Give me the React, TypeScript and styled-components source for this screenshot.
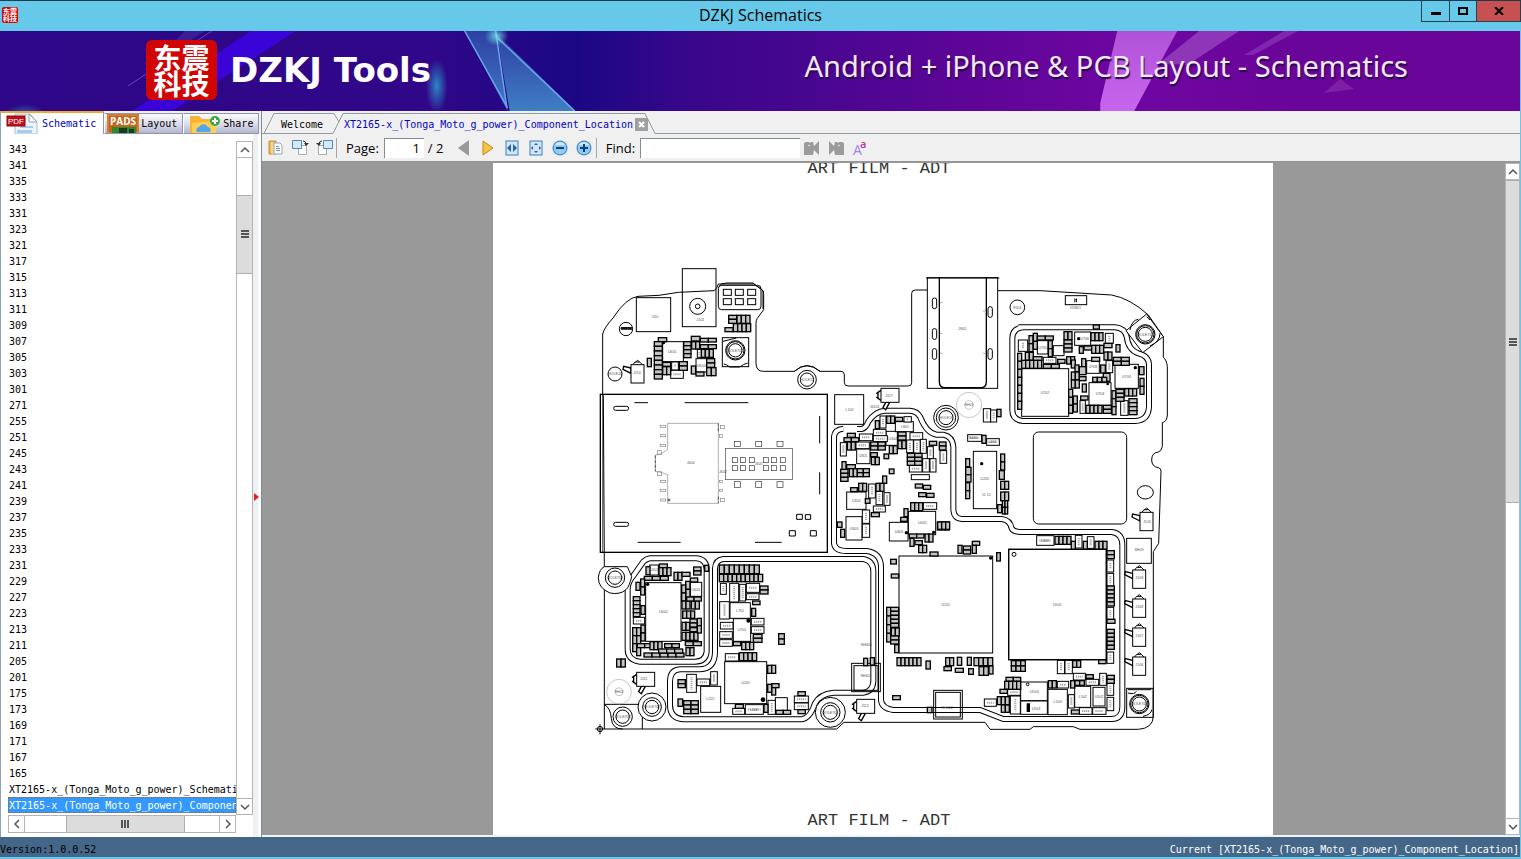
import React from "react";
import styled, { createGlobalStyle, css } from "styled-components";

const mono = `"DejaVu Sans Mono", "Liberation Mono", monospace`;
const sans = `"Open Sans", "Noto Sans", sans-serif`;

const GlobalStyle = createGlobalStyle`
  *, *::before, *::after { box-sizing: border-box; }
  body { margin: 0; overflow: hidden; }
  button, input { font: inherit; color: inherit; }
  button { border: 0; padding: 0; background: none; }
`;

const Window = styled.div`
  display: flex;
  flex-direction: column;
  height: 100vh;
  background: #66c9e9;
  border-top: 1px solid #173c50;
  border-bottom: 2px solid #66c9e9;
  font-family: ${mono};
  font-size: 10px;
  color: #000;
`;

const TitleBar = styled.header`
  position: relative;
  flex: none;
  display: flex;
  align-items: flex-start;
  justify-content: space-between;
  height: 30px;
  padding-left: 2px;
`;

const TitleText = styled.h1`
  flex: 1;
  margin: 0;
  padding-left: 82px;
  text-align: center;
  font: 400 16px/28px ${sans};
`;

const Seal = styled.div<{ $large?: boolean }>`
  flex: none;
  display: grid;
  place-items: center;
  color: #fff;
  background: #d20505;
  font-family: "Noto Sans CJK SC", sans-serif;
  font-weight: 700;
  text-align: center;
  ${(p) =>
    p.$large
      ? css`width: 71px; height: 60px; border-radius: 6px; font-size: 28px; line-height: 26px;`
      : css`width: 16px; height: 16px; margin-top: 6px; border-radius: 2px; font-size: 7px; line-height: 7px;`}
`;

const WindowButtons = styled.div`
  display: flex;
  border: 1px solid #263f49;
  border-top: 0;
  height: 21px;
`;

const WindowButton = styled.button<{ $close?: boolean }>`
  display: grid;
  place-items: center;
  width: ${(p) => (p.$close ? 44 : 27)}px;
  background: ${(p) => (p.$close ? "#c75050" : "transparent")};
  & + & { border-left: 1px solid #263f49; }
`;

const BannerBar = styled.section`
  position: relative;
  flex: none;
  display: flex;
  align-items: center;
  height: 80px;
  margin-right: 1px;
  padding: 0 112px 0 146px;
  overflow: hidden;
  color: #fff;
  background: linear-gradient(90deg, #2d0787 0, #300788 28%, #1b0784 38%, #37078a 45%, #5c0596 63%, #7006a2 75%, #690598 85%, #690598 100%);
`;

const BannerArt = styled.svg`
  position: absolute;
  inset: 0;
  width: 100%;
  height: 100%;
`;

const Brand = styled.div`
  position: relative;
  display: flex;
  align-items: center;
  gap: 13px;
  padding-bottom: 2px;
  font: 700 34px/60px "DejaVu Sans", sans-serif;
`;

const Slogan = styled.p`
  position: relative;
  margin: 0 0 10px auto;
  font: 400 29px/40px "Noto Sans", sans-serif;
  color: #f2e8fa;
  text-shadow: 1px 2px 1px #28084a;
  white-space: nowrap;
`;

const Main = styled.main`
  flex: 1;
  min-height: 0;
  display: flex;
  margin-right: 1px;
  background: #f0f0f0;
`;

const SidePanel = styled.aside`
  flex: none;
  display: flex;
  flex-direction: column;
  width: 261px;
  border-left: 1px solid #8fa3b5;
`;

const SideTabs = styled.nav`
  flex: none;
  display: flex;
  align-items: flex-end;
  height: 23px;
  background: #f0f0f0;
`;

const SideTab = styled.button<{ $active?: boolean }>`
  display: flex;
  align-items: center;
  gap: 2px;
  overflow: hidden;
  height: 21px;
  padding: 0 5px 0 2px;
  border: 1px solid #8b97b0;
  border-left-color: #fff;
  background: linear-gradient(#fafafc, #dedeea 50%, #b6b6d0);
  ${(p) =>
    p.$active &&
    css`
      height: 23px;
      gap: 4px;
      padding: 0 7px 0 5px;
      border: 0;
      border-top: 2px solid #f0a830;
      border-right: 1px solid #8b97b0;
      background: #fff;
      color: #0000c0;
    `}
`;

const SideBody = styled.div`
  position: relative;
  flex: 1;
  min-height: 0;
  display: grid;
  grid-template: minmax(0, 1fr) 18px / minmax(0, 1fr) 17px;
  padding: 7px 8px 4px 7px;
  background: linear-gradient(90deg, #fff 252px, #eef1f3 252px, #eef1f3 257px, #fff 257px);
`;

const FileList = styled.ul`
  margin: 0;
  padding: 0;
  list-style: none;
  overflow: hidden;
  background: #fff;
`;

const FileRow = styled.li<{ $selected?: boolean }>`
  height: 16px;
  padding: 1px 0 0 1px;
  line-height: 16px;
  white-space: nowrap;
  overflow: hidden;
  ${(p) =>
    p.$selected &&
    css`
      color: #fff;
      background: #3399ff;
      outline: 1px dotted #a0661e;
      outline-offset: -1px;
    `}
`;

const SplitMark = styled.svg`
  position: absolute;
  right: 2px;
  top: 51%;
`;

const Track = styled.div<{ $row?: boolean }>`
  display: flex;
  flex-direction: ${(p) => (p.$row ? "row" : "column")};
  min-width: 0;
  min-height: 0;
  background: #fff;
  border: 1px solid #b4b4b4;
`;

const Arrow = styled.button<{ $row?: boolean }>`
  flex: none;
  display: grid;
  place-items: center;
  width: ${(p) => (p.$row ? "16px" : "auto")};
  height: ${(p) => (p.$row ? "auto" : "16px")};
  border: 0 solid #b4b4b4;
  border-width: ${(p) => (p.$row ? "0 1px 0 0" : "0 0 1px")};
  &:last-child { border-width: ${(p) => (p.$row ? "0 0 0 1px" : "1px 0 0")}; }
`;

const Thumb = styled.div<{ $row?: boolean; $grow: number }>`
  flex: ${(p) => p.$grow} 1 0;
  display: grid;
  place-items: center;
  background: #dcdcdc;
  border: solid #b0b0b0;
  border-width: ${(p) => (p.$row ? "0 1px" : "1px 0")};
`;

const Space = styled.div<{ $grow: number }>`
  flex: ${(p) => p.$grow} 1 0;
`;

const Document = styled.section`
  flex: 1;
  min-width: 0;
  display: flex;
  flex-direction: column;
  border-left: 1px solid #808c94;
`;

const DocTabs = styled.nav`
  flex: none;
  display: flex;
  height: 23px;
  background: #f0f0f0;
`;

const DocTab = styled.div<{ $active?: boolean }>`
  position: relative;
  flex: none;
  display: flex;
  align-items: center;
  gap: 2px;
  width: ${(p) => (p.$active ? 323 : 71)}px;
  padding: 4px 0 0 ${(p) => (p.$active ? 11 : 19)}px;
  color: ${(p) => (p.$active ? "#0000c8" : "#000")};
`;

const TabEdge = styled.svg`
  position: absolute;
  left: 0;
  top: 0;
`;

const TabLabel = styled.button`
  position: relative;
  line-height: 14px;
`;

const CloseTab = styled.button`
  position: relative;
  display: grid;
  place-items: center;
  width: 13px;
  height: 13px;
  background: #a0a0a0;
`;

const TabRule = styled.div`
  flex: 1;
  border-bottom: 1px solid #8d9ba3;
`;

const Toolbar = styled.form`
  flex: none;
  display: flex;
  align-items: center;
  height: 29px;
  padding-left: 2px;
  background: #f0f0f0;
  border-bottom: 2px solid #969696;
  font: 400 13px/20px ${sans};
`;

const Tool = styled.button`
  flex: none;
  display: grid;
  place-items: center;
  width: 24px;
  height: 24px;
`;

const Divider = styled.span`
  width: 1px;
  height: 20px;
  margin-right: 9px;
  background: #a5a5a5;
`;

const Field = styled.input<{ $page?: boolean }>`
  width: ${(p) => (p.$page ? 40 : 160)}px;
  height: 20px;
  margin: 0 ${(p) => (p.$page ? 4 : 0)}px 0 5px;
  padding: 0 4px;
  border: solid #808c94;
  border-width: 1px 0 0 1px;
  background: #fff;
  outline: 0;
  text-align: ${(p) => (p.$page ? "right" : "left")};
`;

const PageCount = styled.span`
  width: 24px;
`;

const Viewer = styled.div`
  flex: 1;
  min-height: 0;
  display: grid;
  grid-template-columns: minmax(0, 1fr) 15px;
  background: #999;
  border-bottom: 2px solid #f0f4f8;
`;

const Sheet = styled.article`
  position: relative;
  justify-self: center;
  display: flex;
  flex-direction: column;
  align-items: center;
  justify-content: space-between;
  width: 780px;
  max-width: 100%;
  margin-right: 1px;
  overflow: hidden;
  background: #fff;
`;

const FilmTitle = styled.h2`
  position: relative;
  margin: -3px 8px 5px 0;
  font: 400 17px/18px "Liberation Mono", monospace;
  color: #333;
`;

const BoardDrawing = styled.svg`
  position: absolute;
  left: 0;
  top: 0;
  width: 780px;
  height: 671px;
`;

const StatusBar = styled.footer`
  flex: none;
  display: flex;
  justify-content: space-between;
  height: 20px;
  margin-right: 1px;
  padding: 5px 1px 0 0;
  line-height: 16px;
  background: #446688;
`;

const StatusNote = styled.span`
  color: #fff;
`;

/* ---------- board data, in thirds of a pixel ---------- */

type Cells = string;
type Region = { at: [number, number]; parts: Cells; boxes: Cells; chips: Cells };

const expand = (cells: Cells) =>
  cells
    .trim()
    .split(/\s+/)
    .flatMap((c) => {
      const [x, y, w, h, nx = 1, ny = 1] = c.split(",").map(Number);
      const out: number[][] = [];
      for (let i = 0; i < nx; i++) for (let j = 0; j < ny; j++) out.push([x + i * w, y + j * h, w, h]);
      return out;
    });

const regions: Region[] = [
  {
    at: [291, 291],
    parts: `205,233,25,12 193,245,24,14,1,8 218,307,24,12 218,320,12,24,2 281,245,22,12,1,4 268,305,24,13,1,2 304,229,26,14
      305,245,12,22,2 331,235,24,11,2 331,254,24,12,2 334,268,12,24,3 350,296,24,13,1,2 304,318,13,24 318,336,24,12 350,323,14,24,2
      172,295,12,25 416,166,24,12,1,2 441,166,13,24,3 430,191,13,24,4 405,203,24,12`,
    boxes: `245,306,20,24 242,331,38,24 322,268,12,24`,
    chips: `400,88,24,18 436,88,24,18 473,88,24,18 400,116,24,18 436,116,24,18 473,116,24,18
      139,113,103,102 277,26,101,174 218,245,62,60 318,296,32,40 397,233,79,87`,
  },
  {
    at: [1011, 321],
    parts: `563,250,12,24,1,7 597,197,12,24,1,3 610,190,12,24,1,2 622,198,24,12,2 586,247,12,24,2 610,260,26,12 575,271,12,24,5 640,283,24,12,2
      655,212,12,24,1,2 683,268,22,12 702,185,12,24,2 702,210,24,12,1,3 783,188,12,24,3 748,230,12,20 762,228,24,12 785,226,12,24,3
      822,220,24,13 858,224,12,22 822,246,12,24,2 710,260,12,22,2 724,270,12,24 735,285,12,20 724,306,12,24,2,2 748,320,20,12 757,342,12,24
      716,358,12,24,1,3 730,378,12,24,1,2 752,378,22,12 768,406,12,24,4 820,406,24,12,1,2 785,262,24,12 755,266,12,24 748,290,20,24
      812,285,14,24 850,262,24,12,2,2 820,310,20,24 788,322,14,14,3 884,356,12,22,3 846,362,12,24,1,3 858,358,24,12,1,3
      897,386,24,12,1,4 928,290,14,24 930,325,12,24,1,2 790,165,18,12
      407,566,12,24 407,592,16,22,1,2 407,638,12,24,1,2 512,552,12,24,1,2 508,602,15,26 512,634,12,24,2 512,666,12,26,2 503,704,12,24
      517,692,8,20,2,2 501,418,12,22 456,496,12,24
      136,452,12,24 170,438,12,22,2 196,442,22,12 204,486,24,12,1,2 204,512,12,24,2 178,527,12,24,2 122,516,22,12,2,2 122,548,20,12
      124,562,12,22,2 52,490,24,12 42,503,22,12,2 52,516,12,24,2 36,575,12,24 50,584,26,12 32,598,22,12,1,3 58,596,12,24,2 82,596,18,12,2,2
      232,550,22,12,2,3 298,514,22,12 328,516,20,12,1,2 158,618,12,22 162,552,14,14 178,597,14,14 86,640,12,24,2 138,640,12,24,2
      62,653,20,12 256,642,22,12 280,646,22,12 266,668,22,12 290,670,22,12 106,686,14,14 124,728,24,12 222,716,12,24 212,742,20,12
      242,698,12,24,3 322,756,12,24,3 22,756,14,16 32,778,12,24`,
    boxes: `828,272,20,36 750,392,16,38 872,392,22,44 826,190,24,30 640,262,38,18 460,416,22,40 482,420,18,36 413,494,42,20 470,506,38,20
      88,492,40,20 130,478,38,20 130,497,42,18 78,516,40,20 222,440,22,16 240,488,38,22 230,510,20,38
      251,510,20,40 271,508,18,42 292,530,18,36 330,542,20,38 238,586,38,20 278,566,20,40 300,566,18,40 150,438,18,36
      31,518,18,40 116,642,20,42 138,664,20,40 162,668,18,38 130,708,36,18 97,720,22,40 97,762,22,40 280,698,40,20 565,210,28,34`,
    chips: `244,614,54,15 575,296,141,143 777,338,66,68 855,283,70,72 734,186,48,40 770,272,38,38 622,212,32,40 670,227,32,30 430,544,70,172 14,374,87,89
      706,77,64,27 50,666,58,52 48,740,48,70 235,724,82,70 178,757,56,56 168,484,34,42 196,455,54,30 80,537,40,44`,
  },
  {
    at: [291, 1146],
    parts: `168,65,12,24 208,57,24,12 207,68,12,24,3 163,94,24,12,3 252,82,12,24,2 276,82,24,12 311,66,22,12,1,2 344,61,12,18 301,99,22,12
      287,109,13,24,1,2 275,120,12,24,1,2 138,112,12,24 152,102,12,24,1,2 130,155,20,12,1,5 153,182,12,26 276,168,12,24,2 304,168,12,24,2
      290,156,22,12,2 278,198,12,22,3 276,232,12,24,2 300,222,22,12,1,2 322,220,12,24 128,248,12,24,2,2 153,240,12,24,1,2 128,296,12,24
      142,296,22,12,2 140,308,12,24 162,324,24,12,5 180,290,12,24,3 224,296,22,12,2 206,312,24,12,3 276,262,12,24,4 300,248,22,12
      322,242,12,22 286,290,24,12,2 288,308,12,24,2 80,342,13,24,2
      388,60,15,26,8 388,88,13,22,10 510,123,24,12,1,2 488,168,22,11 485,190,12,24 490,268,26,12,1,2 430,290,22,12 455,292,12,22,3
      448,323,13,24,4 566,266,17,16,1,2 533,361,12,24,2 545,416,22,12 545,428,12,22 533,418,12,24 264,404,22,12,1,2 264,462,14,22
      281,467,22,13,2,3 436,478,24,12 522,478,12,24 558,496,22,12,2 624,440,22,12 624,494,22,12 821,340,12,22 841,338,12,22`,
    boxes: `130,217,34,20 391,115,18,33 419,115,27,56 449,118,18,50 469,115,40,27 469,146,38,18 389,170,29,52 391,232,38,20
      389,260,38,20 389,284,38,20 484,220,38,20 484,245,38,20 406,326,40,22 362,380,20,40 290,388,29,54 321,402,38,20 428,490,36,18
      466,479,54,29 534,466,22,42 613,453,42,20 613,474,42,20`,
    chips: `167,113,106,176 301,112,34,42 179,60,26,30 404,350,126,126 420,173,61,47 430,221,52,68 332,424,60,78 556,458,36,40`,
  },
  {
    at: [1131, 1071],
    parts: `118,42,22,12,2 120,55,12,24 135,62,22,12 146,76,12,22,2 165,42,12,24,2 203,6,12,22,3 180,96,24,12 264,76,12,24 280,78,22,12,1,2
      307,64,22,12 307,76,12,24 380,98,11,25 62,118,17,14 64,162,22,12 50,262,12,26,1,4 62,262,24,12,1,5 64,324,12,24,2 62,348,24,12,1,2
      74,374,12,24 81,413,12,24,6 168,423,13,24 227,413,12,24,2 222,440,22,12 262,412,13,24 256,445,24,12 292,412,12,24 296,446,14,17
      312,413,14,24,4 327,440,14,26,2 357,438,12,24 68,527,23,12 172,562,14,16 555,49,12,24,4 604,64,12,24 640,64,12,24 675,64,12,24,3
      711,92,22,12,1,2 711,198,22,12,1,5 711,298,24,12 711,328,22,12,1,5 686,419,22,12 424,422,14,16,3,2 608,422,12,20,2
      408,472,22,12,2 404,484,12,24,4 390,508,22,12 382,530,12,24,3 394,555,12,22,2 535,482,12,22,2 602,482,12,22 615,482,14,14,2
      648,464,22,11 711,466,22,12,1,2 604,570,24,12`,
    boxes: `500,47,52,29 616,46,20,38 652,50,20,35 711,120,20,36 711,160,20,38 711,262,20,36 711,396,20,34 562,421,22,40 585,421,22,40
      610,460,36,20 648,478,38,18 689,460,20,36 711,490,20,36 711,532,20,40 343,537,36,22 413,508,38,18 421,528,30,54
      562,484,34,20 595,524,18,40 628,563,38,20 668,563,40,20`,
    chips: `87,108,281,291 416,88,293,331 452,486,80,56 452,543,80,40 534,508,58,76 614,499,48,63 669,502,36,56 770,55,74,75 770,505,79,87`,
  },
];

const shields = [
  "M1051,797 Q1025,799 1023,821 V1140 Q1025,1164 1061,1164 H1121 Q1163,1170 1164,1211 V1611 Q1166,1636 1201,1641 H1461 L1531,1668 H1856 Q1888,1667 1888,1631 V1146 Q1888,1111 1856,1107 H1581 Q1561,1106 1556,1096 Q1551,1071 1526,1068 H1406 Q1383,1066 1381,1041 V851 Q1379,821 1351,815 H1331 Q1301,811 1281,761 Q1273,745 1251,743 H1176 Q1146,745 1126,776 Q1119,795 1106,798 H1091",
  "M1576,493 H1866 Q1896,496 1901,521 Q1906,561 1936,571 Q1968,579 1968,606 V731 Q1966,773 1926,774 H1591 Q1558,771 1558,741 V526 Q1558,496 1591,493Z",
  "M471,1186 H611 Q641,1189 641,1221 V1466 Q638,1496 606,1496 H441 Q403,1491 404,1456 V1276 Q406,1256 421,1238 L451,1196 Q459,1188 471,1186Z",
  "M691,1188 H1111 Q1141,1193 1141,1226 V1556 Q1139,1586 1111,1589 H1021 Q981,1593 966,1621 Q951,1666 926,1669 H571 Q531,1666 531,1626 V1556 Q531,1521 561,1519 H621 Q666,1516 666,1466 V1216 Q667,1191 691,1188Z",
];

const boardEdge =
  "M329,697 V513 Q333,495 360,465 Q400,404 435,400 Q500,400 556,388 L663,383 Q672,378 676,363 L782,363 L808,381 Q812,386 812,395 V440 L793,466 Q789,471 789,481 V601 Q789,625 811,625 H904 Q942,591 981,625 H1044 Q1054,625 1054,636 V659 Q1054,669 1066,669 H1246 Q1256,669 1256,659 V391 Q1256,381 1267,381 H1303 M1515,383 H1641 L1856,396 Q1911,406 1966,456 L2011,521 V583 Q2021,591 2023,611 V756 Q2022,776 2008,779 V851 Q2004,866 1996,867 Q1976,869 1976,891 Q1976,911 1996,914 Q2004,916 2004,924 L1997,1141 L1981,1166 V1661 Q1979,1696 1936,1699 H1761 L1741,1691 H1621 L1611,1699 H1491 L1476,1678 H1053 L1031,1698 H334 V1211 L331,697";

/** Circle stacks: centre, then radii from the outside in. */
const rings: number[][] = [
  [614, 430, 24, 7], [399, 498, 20], [366, 633, 21], [727, 562, 29, 26, 20], [942, 650, 28, 20],
  [1573, 433, 22], [1957, 514, 29, 26, 21], [1359, 764, 37, 29, 21], [366, 1244, 29, 20],
  [477, 1632, 42, 28, 20], [389, 1661, 29, 20], [1012, 1648, 45, 29, 21], [1939, 1623, 29, 26, 21],
];

/** Antenna clips: position and quarter turns. */
const clips: number[][] = [
  [414, 605, 0], [1941, 1048, 0], [1919, 1221, 0], [1919, 1308, 0], [1919, 1395, 0], [1919, 1482, 0],
  [1164, 676, 1], [431, 1528, 1], [1091, 1609, 1],
];

const dots: number[][] = [
  [1493, 1185, 5], [810, 1610, 7], [766, 1373, 6], [464, 1264, 5], [1322, 1108, 5], [1466, 902, 5], [1927, 614, 5],
  [1757, 527, 5], [1240, 1109, 5], [1844, 663, 4], [512, 540, 4],
];

const labels: [number, number, string][] = [
  [486, 465, "U10"], [622, 475, "J101"], [538, 570, "U601"], [625, 612, "U604"], [432, 634, "J110"], [366, 637, "HOLE10"], [399, 502, "HOLE08"],
  [727, 566, "HOLE701"], [942, 654, "HOLE15"], [1408, 500, "J801"], [1573, 437, "FID4"], [1747, 439, "VD801"], [1957, 518, "HOLE714"],
  [1656, 693, "U702"], [1821, 695, "U704"], [1900, 645, "U703"], [1775, 530, "U706"], [1800, 616, "U708"], [1649, 557, "U705"],
  [1428, 730, "SH01"], [1359, 768, "HOLE16"], [1070, 745, "L101"], [1188, 702, "J117"], [1475, 950, "U205"], [1480, 1000, "11 12"],
  [1440, 828, "R420"], [1498, 840, "L413"], [1110, 882, "U301"], [1090, 1016, "U302"], [1288, 1083, "U402"], [1083, 1100, "U303"],
  [1218, 1110, "U405"], [1236, 795, "L801"], [1199, 830, "U304"], [593, 902, "J604"], [690, 930, "J602"], [797, 906, "J605"],
  [366, 1248, "HOLE709"], [511, 1350, "U602"], [483, 1224, "U601"], [608, 1283, "U603"], [741, 1346, "L701"], [747, 1404, "U701"],
  [758, 1562, "U201"], [652, 1612, "L201"], [783, 1643, "L202"], [452, 1552, "J111"], [378, 1590, "SH02"], [477, 1636, "HOLE707"],
  [389, 1665, "HOLE708"], [1012, 1652, "HOLE706"], [1119, 1541, "SH401"], [1116, 1633, "J112"], [1120, 1448, "SH405"],
  [1358, 1330, "U101"], [1693, 1328, "U501"], [1624, 1590, "U504"], [1629, 1640, "U503"], [1694, 1620, "L503"], [1769, 1605, "L502"],
  [1818, 1604, "U502"], [1938, 1165, "SH03"], [1939, 1248, "J109"], [1939, 1335, "J108"], [1939, 1422, "J107"], [1939, 1509, "J106"],
  [1962, 1079, "J105"], [1939, 1627, "HOLE705"], [1363, 1638, "SH402"], [1656, 1136, "L601"], [1145, 736, "J6101"],
];

const simPads: number[][] = [
  [211, 106, 16, 6], [211, 134, 16, 6], [211, 163, 16, 6], [211, 271, 16, 6], [211, 298, 16, 6], [211, 327, 16, 6],
  [391, 106, 12, 10], [388, 133, 9, 9], [388, 271, 9, 6], [388, 298, 9, 6], [391, 325, 12, 10], [202, 182, 12, 12], [202, 245, 12, 12],
];
const socketPads = [427, 451, 478, 520, 544, 571].flatMap((x) => [[x, 203, 15, 15], [x, 227, 15, 15]])
  .concat([433, 497, 561].flatMap((x) => [[x, 154, 18, 15], [x, 275, 18, 17]]));

function Cell({ r, ...rest }: { r: number[] } & React.SVGProps<SVGRectElement>) {
  return <rect {...(rest as any)} x={r[0]} y={r[1]} width={r[2]} height={r[3]} />;
}

function Board() {
  return (
    <BoardDrawing viewBox="0 0 2340 2013" role="img" aria-label="Component location drawing" fill="none" stroke="#000" strokeWidth={3}>
      <path d={boardEdge} />
      {shields.map((d) => (
        <g key={d}>
          <path d={d} strokeWidth={18} />
          <path d={d} stroke="#fff" strokeWidth={12} />
        </g>
      ))}
      <path d="M1055,780 V808 M1089,780 V810" stroke="#fff" strokeWidth={6} />

      <g transform="translate(291 681)">
        <rect x={31} y={13} width={681} height={474} strokeWidth={4} />
        <path d="M38,13 V487" strokeWidth={2} />
        <path d="M133,38 H174 M284,38 H475 M689,78 V160 M689,247 V313 M143,457 H272 M495,457 H575" />
        <rect x={71} y={49} width={45} height={12} rx={6} />
        <rect x={71} y={397} width={45} height={12} rx={6} />
        <g stroke="#888" strokeWidth={2}>
          <path d="M233,100 H385 V340 H233 V254 L216,248 L196,244 V196 L216,190 L233,178Z" />
          <path d="M196,196 V244 M385,100 V125 M385,320 V340" stroke="#222" strokeDasharray="10 4" />
          {simPads.map((r, i) => <Cell key={i} r={r} />)}
        </g>
        <rect x={406} y={175} width={201} height={94} strokeWidth={2} stroke="#444" />
        <g strokeWidth={2} stroke="#333">{socketPads.map((r, i) => <Cell key={i} r={r} />)}</g>
        <path d="M620,373h17v15h-17z M646,374h16v14h-16z M598,422h18v16h-18z M661,422h18v16h-18z" />
        <circle cx={237} cy={330} r={3} strokeWidth={2} />
      </g>

      <rect x={676} y={367} width={128} height={73} rx={10} />
      <path d="M678,370 Q684,360 700,360 H780 L810,383 V438" />

      <g transform="translate(1011 321)">
        <rect x={292} y={23} width={211} height={332} fill="#fff" />
        <path d="M288,24 H508" />
        <path d="M328,23 V335 Q328,353 345,353 H452 Q469,353 469,335 V23" strokeWidth={4} />
        {[[307, 84], [307, 176], [307, 236], [474, 110], [474, 236]].map(([x, y]) => (
          <rect key={`${x}-${y}`} x={x} y={y} width={13} height={32} rx={6} />
        ))}
        <path d="M330,98h8 M330,190h8 M330,250h8 M459,123h8 M459,250h8" stroke="#888" strokeWidth={2} />
        <rect x={610} y={486} width={280} height={276} rx={16} />
        <ellipse cx={946} cy={667} rx={24} ry={20} />
        <path d="M950,132 L1000,200 L938,248 L888,182Z" fill="#fff" />
        <path d="M900,180 Q905,150 925,148 M950,140 L960,150 M990,190 Q990,215 960,228" />
        <circle cx={417} cy={405} r={38} stroke="#aaa" strokeWidth={2} />
        <circle cx={417} cy={405} r={13} stroke="#aaa" strokeWidth={2} />
      </g>

      <g transform="translate(291 1146)">
        <path d="M43,65 H112 L125,95 Q118,125 108,134 Q90,150 60,144 Q25,130 25,98 Q28,72 43,65" fill="#fff" />
        <path d="M43,478 H157 V552 M43,478 Q62,490 64,520 Q66,552 98,552" />
        <circle cx={87} cy={440} r={37} stroke="#aaa" strokeWidth={2} />
        <circle cx={87} cy={440} r={12} stroke="#aaa" strokeWidth={2} />
        <circle cx={30} cy={552} r={8} />
        <path d="M16,552 H44 M30,538 V568" />
        <rect x={785} y={355} width={86} height={85} />
        <rect x={792} y={362} width={72} height={74} />
      </g>

      <g transform="translate(1131 1071)">
        <rect x={191} y={511} width={86} height={86} />
        <rect x={197} y={517} width={74} height={74} />
      </g>

      {regions.map((g) => (
        <g key={g.at.join()} transform={`translate(${g.at[0]} ${g.at[1]})`}>
          <g>{expand(g.chips).map((r, i) => <Cell key={i} r={r} fillOpacity={r[3] > 160 && r[2] < 110 ? 0 : 1} fill="#fff" />)}</g>
          <g fill="#fff">{expand(g.boxes).map((r, i) => <Cell key={i} r={r} />)}</g>
          <g fill="#c4c4c4" strokeWidth={4}>{expand(g.parts).map((r, i) => <Cell key={i} r={r} />)}</g>
          <g stroke="#aaa" strokeWidth={6} strokeDasharray="4 2">
            {expand(g.boxes).map(([x, y, w, h], i) =>
              w > h ? <path key={i} d={`M${x + 8},${y + h / 2} h${w - 16}`} /> : <path key={i} d={`M${x + w / 2},${y + 8} v${h - 16}`} />
            )}
          </g>
        </g>
      ))}
      <rect x={1547} y={1159} width={293} height={331} strokeWidth={4} />

      <path d="M690,535 L730,525 M692,603 Q700,603 710,612 H740 Q752,603 764,600 M1905,1580 H1975 M1905,1590 Q1925,1595 1930,1585 M1950,1660 Q1975,1655 1976,1640" />
      {rings.map(([x, y, ...rs]) => rs.map((r) => <circle key={`${x}-${y}-${r}`} cx={x} cy={y} r={r} fill={r > 24 ? "#fff" : "none"} />))}
      <path d="M904,625 Q942,591 981,625" />
      <circle cx={1563} cy={1174} r={6} />
      <circle cx={1604} cy={1564} r={4} />
      <path d="M1601,1621h10v26h-10z M1744,405v14l6,-7z M1752,405v14l-6,-7z M384,492h34v8h-34z" fill="#000" stroke="none" />

      {clips.map(([x, y, turn]) =>
        turn ? (
          <g key={`${x}-${y}`} transform={`translate(${x} ${y})`} fill="#fff">
            <path d="M0,6 L-9,12 V30 L0,36 M-9,12 L-14,16 M-9,30 L-14,26" strokeWidth={4} />
            <path d="M14,42 L6,58 L14,64 L26,42Z" strokeWidth={4} />
            <rect width={54} height={42} />
          </g>
        ) : (
          <g key={`${x}-${y}`} transform={`translate(${x} ${y})`} fill="#fff">
            <path d="M6,0 L12,-8 H26 L34,0 M14,-8 L20,-13 L26,-8" />
            <path d="M0,10 L-22,5 L-24,14 L0,26Z" strokeWidth={4} />
            <rect width={39} height={55} />
          </g>
        )
      )}
      {dots.map(([x, y, r]) => <circle key={`${x}-${y}`} cx={x} cy={y} r={r} fill="#000" stroke="none" />)}
      <g fill="#555" stroke="none" fontFamily="Liberation Sans, sans-serif" fontSize={11} textAnchor="middle">
        {labels.map(([x, y, t], i) => <text key={i} x={x} y={y}>{t}</text>)}
      </g>
    </BoardDrawing>
  );
}

/* ---------- icons ---------- */

const chevrons = { up: "M1 6 5 2 9 6", down: "M1 2 5 6 9 2", left: "M6 1 2 5 6 9", right: "M2 1 6 5 2 9" };

function Chevron({ to }: { to: keyof typeof chevrons }) {
  const flat = to === "up" || to === "down";
  return (
    <svg width={flat ? 10 : 8} height={flat ? 8 : 10} fill="none" stroke="#555" strokeWidth={1.5}>
      <path d={chevrons[to]} />
    </svg>
  );
}

function Grip({ row }: { row?: boolean }) {
  return (
    <svg width={8} height={8} stroke="#555" strokeWidth={2}>
      <path d={row ? "M1 0v8M4 0v8M7 0v8" : "M0 1h8M0 4h8M0 7h8"} />
    </svg>
  );
}

const PdfIcon = () => (
  <svg width={32} height={21} viewBox="0 0 32 21">
    <path d="M9 1h15l7 8v12H9z" fill="#edf4fb" stroke="#a9bdd2" />
    <path d="M23 1v8h8z" fill="#fff" stroke="#8fa5bd" />
    <path d="M14 13h13v2H14zM11 17h15v3H11z" fill="#a8cdec" />
    <rect x={1} y={3} width={18} height={10} fill="#c40d18" stroke="#8d0610" />
    <text x={10} y={11} fontSize={8} textAnchor="middle" fill="#fff" fontFamily="Liberation Sans, sans-serif">PDF</text>
  </svg>
);

const PadsIcon = () => (
  <svg width={32} height={19} viewBox="0 0 32 19">
    <rect width={32} height={19} fill="#c4641c" />
    <rect x={1} y={1} width={30} height={18} fill="none" stroke="#e79a4a" />
    <text x={16} y={11} fontSize={10} fontWeight={700} textAnchor="middle" fill="#fff" fontFamily="Open Sans, sans-serif">PADS</text>
    <path d="M5 13h24v6H5z" fill="#2f8a2c" />
    <path d="M12 14h8v5h-8zM22 15h5v4h-5z" fill="#173d1c" />
  </svg>
);

const ShareIcon = () => (
  <svg width={35} height={19} viewBox="0 0 35 19">
    <path d="M4 2h9l3 3h12v14H4z" fill="#f5b431" />
    <path d="M6 9l24-2v12H6z" fill="#ffcf54" />
    <path d="M11 18a3 3 0 0 1 2-5 5 5 0 0 1 9 0 3 3 0 0 1 2 5z" fill="#54a6ea" />
    <circle cx={29} cy={7} r={5} fill="#3daa45" />
    <path d="M26 7h6M29 4v6" stroke="#fff" strokeWidth={2} />
  </svg>
);

const OpenIcon = () => (
  <svg width={16} height={16}>
    <path d="M1 1h7v13H1z" fill="#e9bb5a" stroke="#c6922f" />
    <path d="M3 2l4 1v12l-4-2z" fill="#f6d68a" />
    <path d="M6 3h6l2 2v9H6z" fill="#fff" stroke="#8da6be" />
    <path d="M8 6.500h3M8 8.500h4M8 10.500h4" stroke="#6793bd" />
  </svg>
);

const RotateIcon = ({ flip }: { flip?: boolean }) => (
  <svg width={17} height={17}>
    <g transform={flip ? "translate(17 0) scale(-1 1)" : undefined}>
      <path d="M6.500 6.500h8v9h-8z" fill="#fff" stroke="#aaa" />
      <path d="M.5 1.500h9v8h-9z" fill="#d5e9fa" stroke="#5289bd" />
      <path d="M11 2q3 0 3 3" fill="none" stroke="#333" />
      <path d="M12 4h5l-3 3z" fill="#333" />
    </g>
  </svg>
);

const PlayIcon = ({ back }: { back?: boolean }) => (
  <svg width={12} height={16}>
    {back ? <path d="M11 0v16L0 8z" fill="#999" /> : <path d="M1 1v14l10-7z" fill="#f6c445" stroke="#c48a17" />}
  </svg>
);

const FitIcon = ({ page }: { page?: boolean }) => (
  <svg width={14} height={16}>
    <rect x={1} y={1} width={12} height={14} fill="#cfe6fa" stroke="#3f7fba" />
    {page ? (
      <path d="M7 3l2 2H5zM7 13l2-2H5zM2 8l2-2v4zM12 8l-2-2v4z" fill="#27639c" />
    ) : (
      <path d="M2 8l4-4v8zM12 8L8 4v8z" fill="#27639c" />
    )}
  </svg>
);

const ZoomIcon = ({ plus }: { plus?: boolean }) => (
  <svg width={16} height={16}>
    <circle cx={8} cy={8} r={7} fill="#8fcaf3" stroke="#2e79b8" />
    <path d="M3 5a6 6 0 0 1 10 0z" fill="#d5edfc" />
    <path d={plus ? "M4 8h8M8 4v8" : "M4 8h8"} stroke="#123f74" strokeWidth={2} />
  </svg>
);

const FindIcon = ({ next }: { next?: boolean }) => (
  <svg width={16} height={16}>
    <g transform={next ? "translate(16 0) scale(-1 1)" : undefined}>
      <path d="M0 3l2-1h3l1 1 1-1h2l1 4 5-5v14l-5-5-1 5H0z" fill="#9b9b9b" />
      <path d="M4 5l2 1" stroke="#f0f0f0" />
    </g>
  </svg>
);

const CaseIcon = () => (
  <svg width={18} height={20} fontFamily="Open Sans, sans-serif">
    <text x={2} y={17} fontSize={14} fill="#9a86f0">A</text>
    <text x={9} y={10} fontSize={11} fontWeight={600} fill="#b8369c">a</text>
  </svg>
);

function BannerBackdrop() {
  return (
    <BannerArt viewBox="0 0 1521 80" preserveAspectRatio="none" aria-hidden="true">
      <defs>
        <linearGradient id="shard" x1="0" y1="0" x2="0" y2="1">
          <stop offset="0" stopColor="#2f3fa4" />
          <stop offset="1" stopColor="#3f7fc2" />
        </linearGradient>
        <linearGradient id="facet" x1="0" y1="0" x2="0" y2="1">
          <stop offset="0" stopColor="#b052d8" />
          <stop offset="1" stopColor="#c666ec" />
        </linearGradient>
        <radialGradient id="glow"><stop offset="0" stopColor="#2b85c4" /><stop offset="1" stopColor="#2b85c4" stopOpacity="0" /></radialGradient>
        <radialGradient id="spark"><stop offset="0" stopColor="#7af0e8" /><stop offset="1" stopColor="#66e5e0" stopOpacity="0" /></radialGradient>
      </defs>
      <path d="M251 0h45L172 80h-40z" fill="#3a04d8" />
      <path d="M212 0L128 55" stroke="#5a4bb6" />
      <path d="M185 0h20L147 38z" fill="#3d1c98" />
      <ellipse cx={437} cy={55} rx={11} ry={27} fill="url(#glow)" />
      <ellipse cx={25} cy={82} rx={20} ry={9} fill="url(#glow)" opacity={0.6} />
      <path d="M465 0h31l12 80z" fill="url(#shard)" />
      <path d="M497 3l79 77h-66z" fill="url(#shard)" />
      <path d="M465 0l43 77M496 0l11 75M498 7l77 73" stroke="#69a6ef" strokeWidth={1.5} fill="none" />
      <ellipse cx={497} cy={5} rx={12} ry={10} fill="url(#spark)" opacity={0.8} />
      <path d="M1200 0h40l-52 34-28-2z" fill="#8f35b8" />
      <path d="M1285 0h14l-45 24h-9z" fill="#8126ae" />
      <path d="M1118 0h60l-43 80h-34v-8z" fill="url(#facet)" />
      <path d="M1341 48l14 10-30 4z" fill="#7d20a8" />
    </BannerArt>
  );
}

const files = (
  "343 341 335 333 331 323 321 317 315 313 311 309 307 305 303 301 271 255 251 245 243 241 239 237 235 233 231 229 227 223 213 211 205 201 175 173 169 171 167 165 " +
  "XT2165-x_(Tonga_Moto_g_power)_Schematic XT2165-x_(Tonga_Moto_g_power)_Component_Location"
).split(" ");
const current = files[files.length - 1];

export default function App() {
  return (
    <Window>
      <GlobalStyle />
      <TitleBar>
        <Seal><span>东震<br />科技</span></Seal>
        <TitleText>DZKJ Schematics</TitleText>
        <WindowButtons>
          <WindowButton aria-label="Minimize"><svg width={10} height={10}><path d="M0 6h10v3H0z" /></svg></WindowButton>
          <WindowButton aria-label="Maximize"><svg width={10} height={8}><path d="M1 1h8v6H1z" fill="none" stroke="#000" strokeWidth={2} /></svg></WindowButton>
          <WindowButton $close aria-label="Close"><svg width={10} height={8}><path d="M1 0l8 8M9 0L1 8" stroke="#000" strokeWidth={2} /></svg></WindowButton>
        </WindowButtons>
      </TitleBar>

      <BannerBar>
        <BannerBackdrop />
        <Brand>
          <Seal $large><span>东震<br />科技</span></Seal>
          DZKJ Tools
        </Brand>
        <Slogan>Android + iPhone &amp; PCB Layout - Schematics</Slogan>
      </BannerBar>

      <Main>
        <SidePanel>
          <SideTabs>
            <SideTab $active><PdfIcon />Schematic</SideTab>
            <SideTab><PadsIcon />Layout</SideTab>
            <SideTab><ShareIcon />Share</SideTab>
          </SideTabs>
          <SideBody>
            <FileList role="listbox" aria-label="Files">
              {files.map((f) => (
                <FileRow key={f} role="option" aria-selected={f === current} $selected={f === current}>{f}</FileRow>
              ))}
            </FileList>
            <Track>
              <Arrow aria-label="Scroll up"><Chevron to="up" /></Arrow>
              <Space $grow={37} />
              <Thumb $grow={77}><Grip /></Thumb>
              <Space $grow={526} />
              <Arrow aria-label="Scroll down"><Chevron to="down" /></Arrow>
            </Track>
            <Track $row>
              <Arrow $row aria-label="Scroll left"><Chevron to="left" /></Arrow>
              <Space $grow={41} />
              <Thumb $row $grow={118}><Grip row /></Thumb>
              <Space $grow={34} />
              <Arrow $row aria-label="Scroll right"><Chevron to="right" /></Arrow>
            </Track>
            <SplitMark width={5} height={8}><path d="M0 0v8l5-4z" fill="#e02020" /></SplitMark>
          </SideBody>
        </SidePanel>

        <Document>
          <DocTabs>
            <DocTab>
              <TabEdge width={84} height={23} fill="none" stroke="#8d9ba3">
                <path d="M0 22.500H2L12 2.500H72L77 11M0 22.500H71" />
              </TabEdge>
              <TabLabel>Welcome</TabLabel>
            </DocTab>
            <DocTab $active>
              <TabEdge width={323} height={23} fill="none" stroke="#8d9ba3">
                <path d="M0 22.500L10 2.500H312L322 22.500H323" />
              </TabEdge>
              <TabLabel>{current}</TabLabel>
              <CloseTab aria-label="Close tab"><svg width={7} height={7}><path d="M1 1l5 5M6 1L1 6" stroke="#fff" strokeWidth={2} /></svg></CloseTab>
            </DocTab>
            <TabRule />
          </DocTabs>

          <Toolbar onSubmit={(e) => e.preventDefault()}>
            <Tool type="button" aria-label="Open"><OpenIcon /></Tool>
            <Tool type="button" aria-label="Rotate right"><RotateIcon /></Tool>
            <Tool type="button" aria-label="Rotate left"><RotateIcon flip /></Tool>
            <Divider />
            <label htmlFor="page">Page:</label>
            <Field id="page" $page defaultValue="1" />
            <PageCount>/ 2</PageCount>
            <Tool type="button" aria-label="Previous page"><PlayIcon back /></Tool>
            <Tool type="button" aria-label="Next page"><PlayIcon /></Tool>
            <Tool type="button" aria-label="Fit width"><FitIcon /></Tool>
            <Tool type="button" aria-label="Fit page"><FitIcon page /></Tool>
            <Tool type="button" aria-label="Zoom out"><ZoomIcon /></Tool>
            <Tool type="button" aria-label="Zoom in"><ZoomIcon plus /></Tool>
            <Divider />
            <label htmlFor="find">Find:</label>
            <Field id="find" />
            <Tool type="button" aria-label="Find previous"><FindIcon /></Tool>
            <Tool type="button" aria-label="Find next"><FindIcon next /></Tool>
            <Tool type="button" aria-label="Match case"><CaseIcon /></Tool>
          </Toolbar>

          <Viewer>
            <Sheet>
              <Board />
              <FilmTitle>ART FILM - ADT</FilmTitle>
              <FilmTitle>ART FILM - ADT</FilmTitle>
            </Sheet>
            <Track>
              <Arrow aria-label="Page up"><Chevron to="up" /></Arrow>
              <Thumb $grow={324}><Grip /></Thumb>
              <Space $grow={317} />
              <Arrow aria-label="Page down"><Chevron to="down" /></Arrow>
            </Track>
          </Viewer>
        </Document>
      </Main>

      <StatusBar>
        <span>Version:1.0.0.52</span>
        <StatusNote>Current [{current}]</StatusNote>
      </StatusBar>
    </Window>
  );
}
